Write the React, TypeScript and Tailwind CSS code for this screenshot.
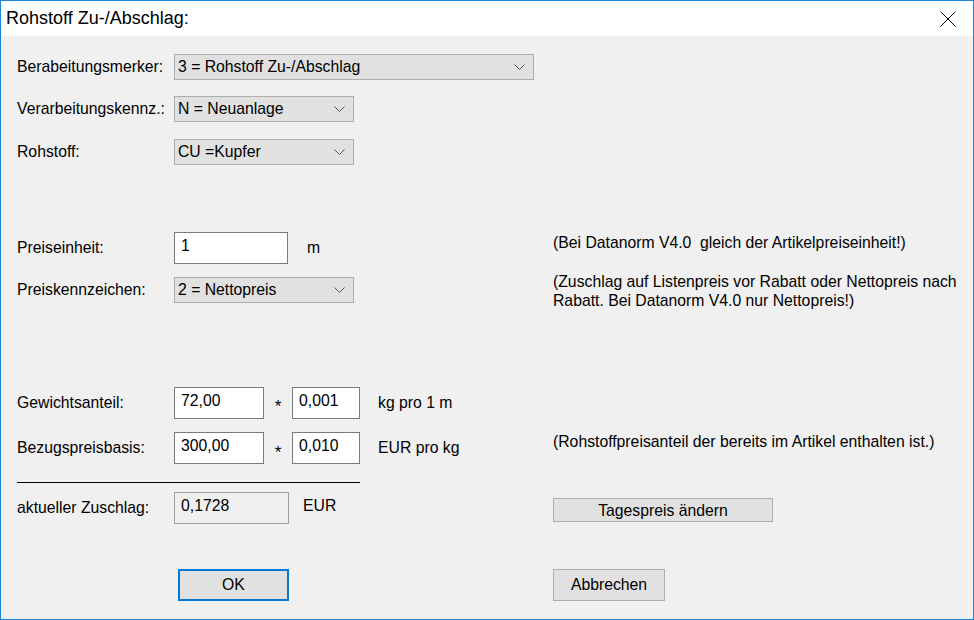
const font = { fontFamily: '"Liberation Sans", Arial, sans-serif' };

function Chevron() {
  return (
    <svg width="11" height="6" viewBox="0 0 11 6" className="shrink-0">
      <path d="M0.5 0.5 L5.5 5.5 L10.5 0.5" fill="none" stroke="#555" strokeWidth="1" />
    </svg>
  );
}

function CloseIcon() {
  return (
    <svg width="16" height="16" viewBox="0 0 16 16">
      <path d="M0.5 0.5 L15.5 15.5 M15.5 0.5 L0.5 15.5" fill="none" stroke="#000" strokeWidth="1" />
    </svg>
  );
}

function Combo({ value, width }: { value: string; width: string }) {
  return (
    <div
      className={`${width} flex h-[26px] items-center justify-between border border-[#adadad] bg-[#e1e1e1] pl-[3px] pr-[8px] text-[15.75px] text-black`}
    >
      <span>{value}</span>
      <Chevron />
    </div>
  );
}

function Field({ value, width, disabled }: { value: string; width: string; disabled?: boolean }) {
  return (
    <div
      className={`${width} h-[32px] border pl-[6px] pt-[4px] text-[15.75px] leading-[18px] text-black ${
        disabled ? 'border-[#a0a0a0] bg-[#f0f0f0]' : 'border-[#7a7a7a] bg-white'
      }`}
    >
      {value}
    </div>
  );
}

function Label({ children }: { children: React.ReactNode }) {
  return <div className="w-[157px] shrink-0 text-[15.75px] text-black">{children}</div>;
}

export default function App() {
  return (
    <div
      className="flex h-[620px] w-[974px] flex-col border border-[#1883d7] bg-[#f0f0f0]"
      style={font}
    >
      {/* Title bar */}
      <div className="flex h-[35px] shrink-0 items-center justify-between bg-white pl-[5px] pr-[17px]">
        <span className="text-[18px] text-black">Rohstoff Zu-/Abschlag:</span>
        <CloseIcon />
      </div>

      <div className="flex flex-col pl-[16px] pt-[18px]">
        <div className="flex items-center">
          <Label>Berabeitungsmerker:</Label>
          <Combo value="3 = Rohstoff Zu-/Abschlag" width="w-[360px]" />
        </div>
        <div className="mt-[16px] flex items-center">
          <Label>Verarbeitungskennz.:</Label>
          <Combo value="N = Neuanlage" width="w-[180px]" />
        </div>
        <div className="mt-[17px] flex items-center">
          <Label>Rohstoff:</Label>
          <Combo value="CU =Kupfer" width="w-[180px]" />
        </div>

        <div className="mt-[67px] flex items-start">
          <div className="flex w-[536px] shrink-0 items-center">
            <Label>Preiseinheit:</Label>
            <Field value="1" width="w-[114px]" />
            <span className="ml-[19px] text-[15.75px] text-black">m</span>
          </div>
          <div className="pt-[1px] text-[15.75px] leading-[19px] text-black">
            (Bei Datanorm V4.0&nbsp;&nbsp;gleich der Artikelpreiseinheit!)
          </div>
        </div>

        <div className="mt-[13px] flex items-start">
          <div className="flex w-[536px] shrink-0 items-center">
            <Label>Preiskennzeichen:</Label>
            <Combo value="2 = Nettopreis" width="w-[180px]" />
          </div>
          <div className="-mt-[5px] text-[15.75px] leading-[19px] text-black">
            (Zuschlag auf Listenpreis vor Rabatt oder Nettopreis nach
            <br />
            Rabatt. Bei Datanorm V4.0 nur Nettopreis!)
          </div>
        </div>

        <div className="mt-[76px] flex items-center">
          <Label>Gewichtsanteil:</Label>
          <Field value="72,00" width="w-[90px]" />
          <span className="w-[28px] pt-[8px] text-center text-[17px] text-black">*</span>
          <Field value="0,001" width="w-[68px]" />
          <span className="ml-[18px] text-[15.75px] text-black">kg pro 1 m</span>
        </div>

        <div className="mt-[12px] flex items-center">
          <div className="flex w-[536px] shrink-0 items-center">
            <Label>Bezugspreisbasis:</Label>
            <Field value="300,00" width="w-[90px]" />
            <span className="w-[28px] pt-[8px] text-center text-[17px] text-black">*</span>
            <Field value="0,010" width="w-[68px]" />
            <span className="ml-[18px] text-[15.75px] text-black">EUR pro kg</span>
          </div>
          <span className="-mt-[12px] text-[15.75px] text-black">
            (Rohstoffpreisanteil der bereits im Artikel enthalten ist.)
          </span>
        </div>

        <div className="mt-[17px] h-px w-[343px] bg-black" />

        <div className="mt-[9px] flex items-center">
          <div className="flex w-[536px] shrink-0 items-center">
            <Label>aktueller Zuschlag:</Label>
            <Field value="0,1728" width="w-[115px]" disabled />
            <span className="-mt-[4px] ml-[14px] text-[15.75px] text-black">EUR</span>
          </div>
          <button className="mt-[3px] h-[24px] w-[220px] border border-[#adadad] bg-[#e1e1e1] text-[15.75px] text-black">
            Tagespreis ändern
          </button>
        </div>

        <div className="mt-[45px] flex items-center">
          <div className="w-[536px] shrink-0 pl-[161px]">
            <button className="h-[32px] w-[111px] border-2 border-[#0078d7] bg-[#e1e1e1] text-[15.75px] text-black">
              OK
            </button>
          </div>
          <button className="h-[32px] w-[112px] border border-[#adadad] bg-[#e1e1e1] text-[15.75px] text-black">
            Abbrechen
          </button>
        </div>
      </div>
    </div>
  );
}
